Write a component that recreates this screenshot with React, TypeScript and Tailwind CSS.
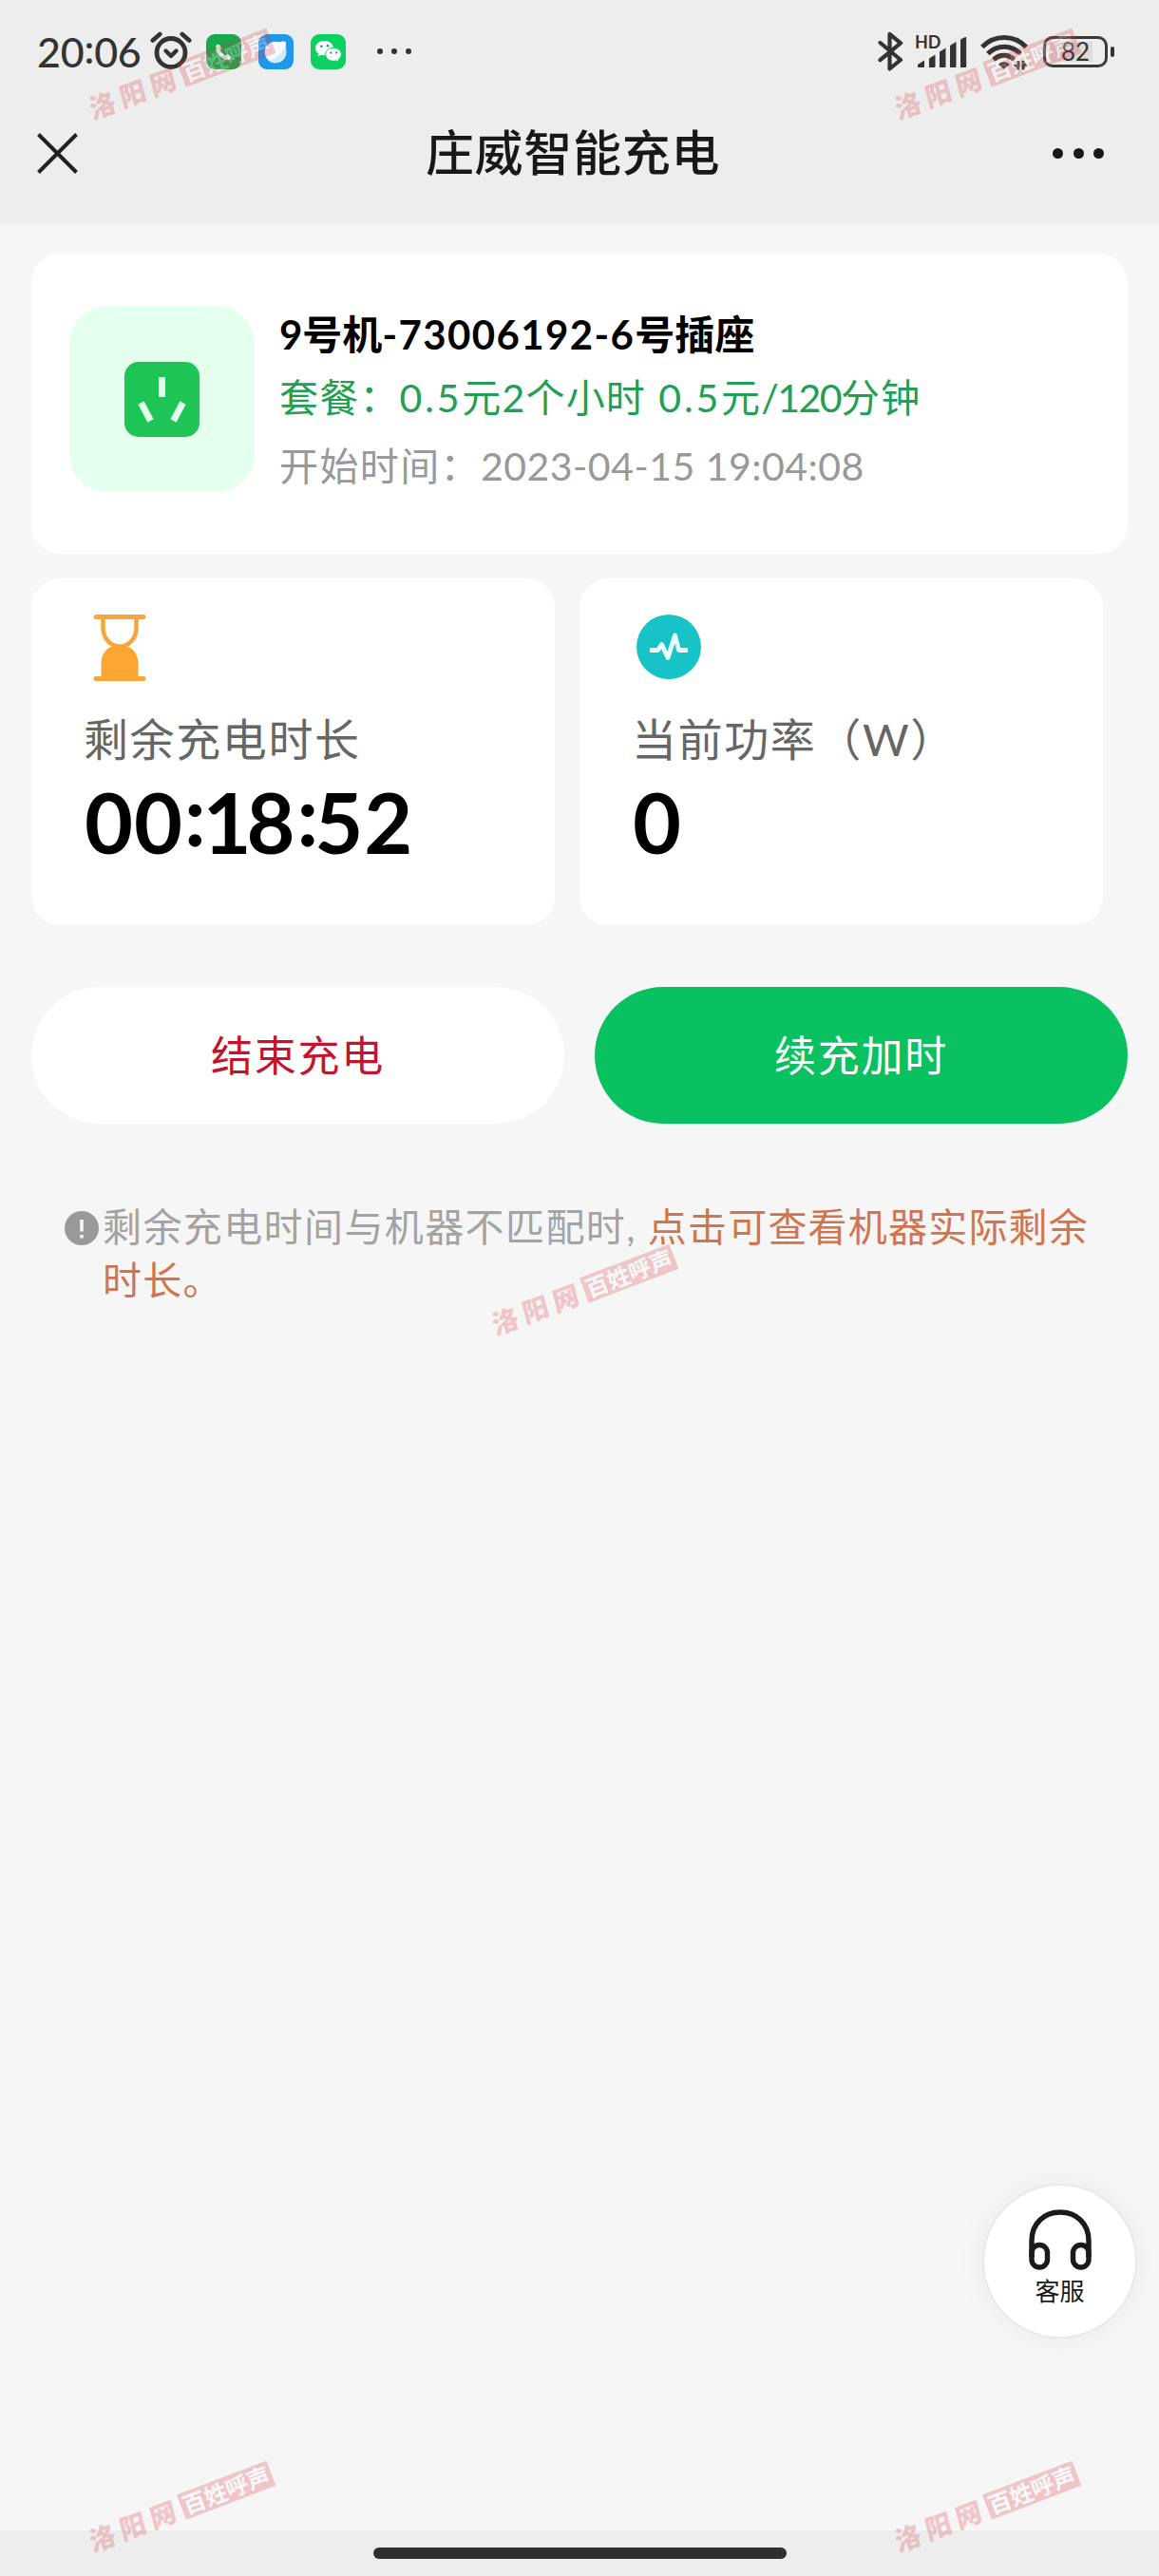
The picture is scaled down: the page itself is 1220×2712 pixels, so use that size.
import React from "react";

const WATERMARKS = [
  { id: "tl", pos: "left-[88px] top-[65px]" },
  { id: "tr", pos: "left-[936px] top-[65px]" },
  { id: "mid", pos: "left-[512px] top-[1345px]" },
  { id: "bl", pos: "left-[88px] top-[2626px]" },
  { id: "br", pos: "left-[936px] top-[2626px]" },
];

function AlarmIcon() {
  return (
    <svg className="h-[40px] w-[44px]" viewBox="0 0 44 40" fill="none" stroke="#333" strokeLinecap="round">
      <circle cx="22" cy="22.500" r="15" strokeWidth="4.800" />
      <path d="M16.500 20.500l5.500 5.500 5.500-5.500" strokeWidth="4.400" strokeLinejoin="round" />
      <path d="M2.800 9.500l7.500-6.500M41.200 9.500l-7.500-6.500" strokeWidth="4.600" />
    </svg>
  );
}

function PhoneAppIcon() {
  return (
    <svg className="h-[37px] w-[37px]" viewBox="0 0 37 37">
      <rect width="37" height="37" rx="9" fill="#17a94f" />
      <path
        d="M10.500 12c1-1.500 3-1.800 3.800-.5l1.500 2.800c.4 1-.8 1.800-.6 2.800.6 2 2.600 4.300 4.700 5.200 1 .3 1.600-1 2.700-.7l2.800 1.400c1.200.8.7 2.600-.4 3.400-5.500 3.600-16.500-6.900-14.500-14.400z"
        fill="#e3f8e8"
      />
    </svg>
  );
}

function BrowserAppIcon() {
  return (
    <svg className="h-[37px] w-[37px]" viewBox="0 0 37 37">
      <rect width="37" height="37" rx="9" fill="#1f97ea" />
      <circle cx="18" cy="19" r="11.300" fill="#f4fbff" />
      <path d="M21 9c3-1.800 6.500-2 7.500-1s.8 4-1 7z" fill="#f4fbff" />
      <path d="M12 28.500C20 25 26 18 29 12c1.500 9-3 18-11 18.300-2.500 0-4.500-.6-6-1.800z" fill="#cdeafc" />
    </svg>
  );
}

function WechatAppIcon() {
  return (
    <svg className="h-[37px] w-[37px]" viewBox="0 0 37 37">
      <rect width="37" height="37" rx="9" fill="#09d263" />
      <path d="M14.500 7C9.200 7 5 10.400 5 14.700c0 2.400 1.300 4.500 3.400 5.900l-.9 3 3.500-1.800c1.100.3 2.300.5 3.500.5 5.300 0 9.500-3.400 9.500-7.600S19.800 7 14.500 7z" fill="#fff" />
      <path d="M24 14.300c-4.700 0-8.400 3.100-8.400 7s3.700 7 8.400 7c1 0 2-.2 2.900-.4l3 1.600-.8-2.700c1.900-1.300 3.200-3.300 3.200-5.500 0-3.900-3.700-7-8.300-7z" fill="#fff" stroke="#09d263" strokeWidth="1" />
      <g fill="#27935a">
        <circle cx="11.300" cy="12.800" r="1.300" />
        <circle cx="18" cy="12.300" r="1.300" />
        <circle cx="21.300" cy="19.600" r="1.100" />
        <circle cx="27" cy="19.600" r="1.100" />
      </g>
    </svg>
  );
}

function BluetoothIcon() {
  return (
    <svg className="h-[42px] w-[28px]" viewBox="0 0 28 42" fill="none" stroke="#333" strokeWidth="4.200" strokeLinejoin="round" strokeLinecap="round">
      <path d="M2.500 12l21.500 18-11.500 9.500V2.800L24 12.300 2.500 30.200" />
    </svg>
  );
}

function SignalIcon() {
  return (
    <svg className="h-[33px] w-[52px]" viewBox="0 0 52 33" fill="#333">
      <path d="M0 32v-3l7-4.500V31q0 1-1 1zM12 32V22.500l6.500-4V31q0 1-1 1h-5.500zM23 32V15.500l6.500-4V31q0 1-1 1h-5.500zM34 32V9l6.500-4v26q0 1-1 1h-5.500zM45 32V3.500q0-1 1-1.500l4-2q1.200-.3 1.200 1V31q0 1-1 1z" />
    </svg>
  );
}

function WifiIcon() {
  return (
    <svg className="h-[38px] w-[50px]" viewBox="0 0 50 38" fill="none" stroke="#333" strokeWidth="5">
      <path d="M1.800 13.500c13-13.300 33.400-13.300 46.400 0" />
      <path d="M7.800 20.500c9.600-9.800 24.800-9.800 34.400 0" />
      <path d="M14 27c6-6.200 15.500-6.200 21.500 0" />
      <path d="M19 32c3-3.600 8.600-3.600 11.600 0l-5.800 4.800z" fill="#333" stroke="none" />
      <path d="M39.800 28v9.500M45 28v9.500" strokeWidth="3" />
      <path d="M40 37.500l-6-5.500h6zM45 28l5 5.500h-5z" fill="#333" stroke="none" />
    </svg>
  );
}

function StatusBar() {
  return (
    <div className="flex h-[107px] items-start text-[#333]">
      <span className="ml-[39px] mt-[30px] w-[119px] whitespace-nowrap text-[43px] font-medium leading-[50px] tracking-[-0.2px]">
        20<span className="relative -top-[4px]">:</span>06
      </span>
      <span className="mt-[33px]"><AlarmIcon /></span>
      <div className="ml-[15px] mt-[36px] flex gap-[18px]">
        <PhoneAppIcon />
        <BrowserAppIcon />
        <WechatAppIcon />
      </div>
      <div className="ml-[33px] mt-[51px] flex gap-[9px]">
        <span className="h-[6px] w-[6px] rounded-full bg-[#333]" />
        <span className="h-[6px] w-[6px] rounded-full bg-[#333]" />
        <span className="h-[6px] w-[6px] rounded-full bg-[#333]" />
      </div>

      <div className="ml-auto mr-[47px] flex items-start">
        <span className="mt-[33px]"><BluetoothIcon /></span>
        <div className="relative ml-[14px] mt-[39px]">
          <SignalIcon />
          <span className="absolute -left-[3px] -top-[5px] text-[18px] font-bold leading-[20px]">HD</span>
        </div>
        <span className="ml-[14px] mt-[36px]"><WifiIcon /></span>
        <div className="relative ml-[16px] mt-[38px] flex h-[33px] w-[68px] items-center justify-center rounded-[10px] border-[3px] border-[#3a3a3a]">
          <span className="absolute left-[3px] top-[3px] h-[21px] w-[46px] rounded-l-[5px] bg-[#dcdcdc]" />
          <span className="relative text-[26px] leading-[27px]">82</span>
        </div>
        <span className="ml-[3px] mt-[49px] h-[11px] w-[4px] rounded-[2px] bg-[#333]" />
      </div>
    </div>
  );
}

function NavBar() {
  return (
    <div className="grid h-[128px] grid-cols-[1fr_auto_1fr] items-start">
      <svg className="ml-[39px] mt-[33px] h-[43px] w-[43px]" viewBox="0 0 43 43" stroke="#222" strokeWidth="4">
        <path d="M1.500 1.500l40 40M41.500 1.500l-40 40" />
      </svg>
      <h1 className="mr-[14px] mt-[18px] text-[51px] font-medium leading-[72px] tracking-[0.7px] text-[#181818]">
        庄威智能充电
      </h1>
      <div className="mr-[58px] mt-[49px] flex justify-end gap-[10.500px]">
        <span className="h-[11px] w-[11px] rounded-full bg-[#181818]" />
        <span className="h-[11px] w-[11px] rounded-full bg-[#181818]" />
        <span className="h-[11px] w-[11px] rounded-full bg-[#181818]" />
      </div>
    </div>
  );
}

function SocketIcon() {
  return (
    <svg className="h-[79px] w-[79px]" viewBox="0 0 79 79">
      <rect width="79" height="79" rx="15" fill="#1ec455" />
      <g stroke="#e2ffec" strokeWidth="7" strokeLinecap="butt">
        <path d="M39.500 16v21M17.500 43l10 19M61.500 43l-10 19" />
      </g>
    </svg>
  );
}

function HourglassIcon() {
  return (
    <svg className="h-[72px] w-[56px]" viewBox="0 0 56 72">
      <path d="M3 3.500h50M3 68.500h50" stroke="#f8a63c" strokeWidth="5" strokeLinecap="round" />
      <path d="M10.500 5v10c0 10 7 19.500 17.500 19.500S45.500 25 45.500 15V5" fill="none" stroke="#f8a63c" strokeWidth="4.500" />
      <path d="M8.500 68V53c0-9 4-15 10-18h19c6 3 10 9 10 18v15z" fill="#fea632" />
    </svg>
  );
}

function PowerIcon() {
  return (
    <svg className="h-[68px] w-[68px]" viewBox="0 0 68 68">
      <circle cx="34" cy="34" r="34" fill="#17c3c6" />
      <path d="M14 37.500h8.500l4-6 6.500 14L40.500 22l4 15.500H54" fill="none" stroke="#e9ffff" strokeWidth="4.800" strokeLinejoin="round" />
    </svg>
  );
}

function StatCard({ icon, label, children }: { icon: React.ReactNode; label: string; children: React.ReactNode }) {
  return (
    <div className="h-[365px] w-[551px] rounded-[30px] bg-white pl-[55px]">
      <div className="h-[132px] pt-[37px]">{icon}</div>
      <div className="h-[74px] text-[47px] leading-[74px] tracking-[1.6px] text-[#666]">{label}</div>
      <div className="-mt-[2px] pl-[1px] text-[88px] font-bold leading-[104px] tracking-[0.9px] text-black">{children}</div>
    </div>
  );
}

function Watermark({ pos }: { pos: string }) {
  return (
    <div
      className={`pointer-events-none absolute flex h-[28px] w-[204px] -rotate-[20.8deg] items-center whitespace-nowrap opacity-25 ${pos}`}
    >
      <span className="w-[103px] -skew-x-6 text-[28px] font-black leading-[28px] tracking-[6px] text-[#d73c46]">洛阳网</span>
      <span className="flex h-[28px] w-[101px] items-center justify-center bg-[#d73c46] text-[24px] font-bold leading-[28px] text-white">
        百姓呼声
      </span>
    </div>
  );
}

export default function App() {
  return (
    <div className="relative flex h-[2712px] w-[1220px] flex-col overflow-hidden bg-[#f6f6f6] font-['Lato','Noto_Sans_CJK_SC',sans-serif]">
      <header className="h-[235px] bg-[#ededed]">
        <StatusBar />
        <NavBar />
      </header>

      <main className="flex-1 px-[33px] pt-8">
        {/* Socket and plan */}
        <section className="flex h-[316px] rounded-[30px] bg-white pl-10 pt-[55px]">
          <div className="flex h-[196px] w-[195px] items-center justify-center rounded-[40px] bg-[#e4ffee]">
            <SocketIcon />
          </div>
          <div className="ml-[26px] whitespace-nowrap text-[41px]">
            <h2 className="h-[62px] text-[42px] font-bold leading-[60px] text-black">
              9号机<span className="tracking-[1.4px]">-73006192-6</span>号插座
            </h2>
            <p className="h-[71px] leading-[70px] tracking-[1.2px] text-[#22a052]">
              套餐：<span className="tracking-[2.800px]">0.5</span>元2个小时<span className="tracking-[2.800px]"> 0.5</span>元<span className="tracking-[-1.500px]">/120</span>分钟
            </p>
            <p className="leading-[71px] tracking-[1.4px] text-[#999]">
              开始时间：<span className="tracking-[0.5px]">2023-04-15 19:04:08</span>
            </p>
          </div>
        </section>

        <section className="mt-[26px] flex gap-[26px]">
          <StatCard icon={<span className="block pl-[10px]"><HourglassIcon /></span>} label="剩余充电时长">
            00<span className="relative -top-[8px] left-[1px] tracking-[-2px]">:</span>
            <span className="tracking-[-5px]">1</span>8<span className="relative -top-[8px] left-[1px] tracking-[-3px]">:</span>52
          </StatCard>
          <StatCard icon={<span className="block pl-[5px] pt-[1px]"><PowerIcon /></span>} label="当前功率（W）">
            0
          </StatCard>
        </section>

        <section className="mt-[65px] flex gap-8 text-[44px] leading-[60px] tracking-[1.8px]">
          <button className="h-[144px] w-[561px] rounded-full bg-white text-[#c3142d]">结束充电</button>
          <button className="h-[144px] w-[561px] rounded-full bg-[#09c160] text-white">续充加时</button>
        </section>

        {/* Mismatch hint */}
        <section className="mt-[81px] flex pl-[35px]">
          <svg className="mt-[11px] h-[36px] w-[36px]" viewBox="0 0 36 36">
            <circle cx="18" cy="18" r="18" fill="#999" />
            <path d="M18 9v12.500M18 25v3.500" stroke="#f6f6f6" strokeWidth="3.600" />
          </svg>
          <p className="ml-[4px] whitespace-nowrap text-[41px] leading-[56px] tracking-[1.4px] text-[#a3a3a3]">
            剩余充电时间与机器不匹配时, <span className="tracking-[1.2px] text-[#d07550]">点击可查看机器实际剩余<br />时长。</span>
          </p>
        </section>
      </main>

      <button className="absolute left-[1036px] top-[2301px] flex h-[159px] w-[159px] flex-col items-center rounded-full bg-white pt-[25px] shadow-[0_0_0_2px_#e9e9e9,0_0_36px_rgba(0,0,0,0.05)]">
        <svg className="h-[64px] w-[66px]" viewBox="0 0 66 64" fill="none" stroke="#1a1a1a" strokeWidth="5.400">
          <path d="M3 50V33C3 15 16 3 33 3s30 12 30 30v17" />
          <rect x="3" y="37.500" width="16.500" height="23.500" rx="8.200" />
          <rect x="46.500" y="37.500" width="16.500" height="23.500" rx="8.200" />
        </svg>
        <span className="mt-[5px] text-[26px] leading-[34px] text-[#1a1a1a]">客服</span>
      </button>

      <footer className="flex h-12 justify-center bg-[#ededed] pt-[18px]">
        <div className="h-3 w-[435px] rounded-full bg-[#2f2f2f]" />
      </footer>

      {WATERMARKS.map((mark) => (
        <Watermark key={mark.id} pos={mark.pos} />
      ))}
    </div>
  );
}
